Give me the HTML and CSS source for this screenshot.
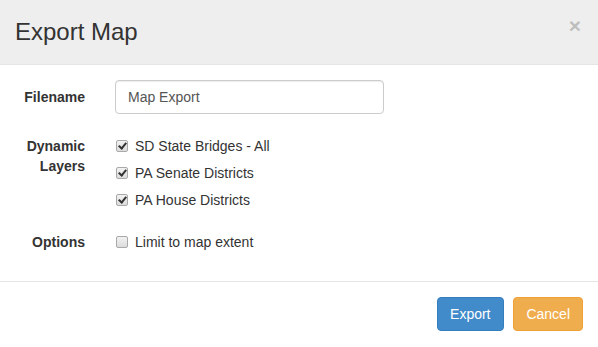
FILE: index.html
```html
<!DOCTYPE html>
<html lang="en">
  <head>
    <meta charset="UTF-8" />
    <meta name="viewport" content="width=device-width, initial-scale=1.0" />
    <title>Export Map</title>
    <link rel="stylesheet" href="styles.css">
  </head>
  <body>
    <div class="modal-content">
      <div class="modal-header">
        <button type="button" class="close">&times;</button>
        <h4 class="modal-title">Export Map</h4>
      </div>

      <div class="modal-body">
        <form class="form-horizontal">
          <!-- ファイル名 -->
          <div class="form-group">
            <label class="control-label">Filename</label>
            <div class="field">
              <input type="text" class="form-control" value="Map Export">
            </div>
          </div>

          <!-- レイヤー -->
          <div class="form-group">
            <label class="control-label">Dynamic<br>Layers</label>
            <div class="field">
              <div class="checkbox">
                <label><input type="checkbox" checked> SD State Bridges - All</label>
              </div>
              <div class="checkbox">
                <label><input type="checkbox" checked> PA Senate Districts</label>
              </div>
              <div class="checkbox">
                <label><input type="checkbox" checked> PA House Districts</label>
              </div>
            </div>
          </div>

          <!-- オプション -->
          <div class="form-group">
            <label class="control-label">Options</label>
            <div class="field">
              <div class="checkbox">
                <label><input type="checkbox"> Limit to map extent</label>
              </div>
            </div>
          </div>
        </form>
      </div>

      <div class="modal-footer">
        <button type="button" class="btn btn-primary">Export</button>
        <button type="button" class="btn btn-warning">Cancel</button>
      </div>
    </div>
  </body>
</html>
```

FILE: styles.css
```css
* {
  margin: 0;
  padding: 0;
  box-sizing: border-box;
}

body {
  background: #fff;
  font-family: "Liberation Sans", Arial, sans-serif;
  font-size: 14px;
  line-height: 20px;
  color: #333;
}

.modal-content {
  width: 598px;
  height: 347px;
  background: #fff;
}

.modal-header {
  background: #eeeeee;
  padding: 15px;
  border-bottom: 1px solid #e5e5e5;
  height: 65px;
}

.modal-title {
  font-size: 24px;
  font-weight: normal;
  line-height: 34px;
  color: #333;
}

.close {
  float: right;
  margin-top: 0;
  margin-right: 2px;
  background: none;
  border: none;
  font-family: "Liberation Sans", Arial, sans-serif;
  font-size: 21px;
  font-weight: bold;
  line-height: 1;
  color: #000;
  opacity: 0.2;
  cursor: pointer;
}

.modal-body {
  padding: 15px 15px 0 15px;
  height: 216px;
}

.form-group {
  display: flex;
  margin: 0 -15px 15px -15px;
}

.control-label {
  width: 100px;
  padding: 7px 15px 0 15px;
  text-align: right;
  font-weight: bold;
  line-height: 20px;
}

.field {
  width: 299px;
  padding: 0 15px;
}

.form-control {
  display: block;
  width: 100%;
  height: 34px;
  padding: 6px 12px;
  font-family: inherit;
  font-size: 14px;
  color: #555;
  background: #fff;
  border: 1px solid #ccc;
  border-radius: 4px;
  box-shadow: inset 0 1px 1px rgba(0, 0, 0, 0.075);
  outline: none;
}

.checkbox {
  min-height: 27px;
  padding-top: 7px;
}

.checkbox label {
  display: flex;
  align-items: center;
  gap: 7px;
  padding-left: 1px;
  font-weight: normal;
  cursor: pointer;
  white-space: nowrap;
}

.checkbox input {
  appearance: none;
  -webkit-appearance: none;
  width: 12px;
  height: 12px;
  margin: 0;
  flex: none;
  border: 1px solid #a9a9a9;
  border-radius: 2px;
  background: linear-gradient(#f2f2f2, #dcdcdc);
  position: relative;
}

.checkbox input:checked::after {
  content: '';
  position: absolute;
  left: 3px;
  top: 0;
  width: 3px;
  height: 6px;
  border: solid #333;
  border-width: 0 2px 2px 0;
  transform: rotate(40deg);
}

.modal-footer {
  border-top: 1px solid #e5e5e5;
  padding: 15px;
  text-align: right;
}

.btn {
  display: inline-block;
  height: 34px;
  padding: 6px 12px;
  font-family: inherit;
  font-size: 14px;
  line-height: 20px;
  color: #fff;
  border: 1px solid transparent;
  border-radius: 4px;
  cursor: pointer;
}

.btn + .btn {
  margin-left: 6px;
}

.btn-primary {
  background: #428bca;
  border-color: #357ebd;
}

.btn-warning {
  background: #f0ad4e;
  border-color: #eea236;
}
```
